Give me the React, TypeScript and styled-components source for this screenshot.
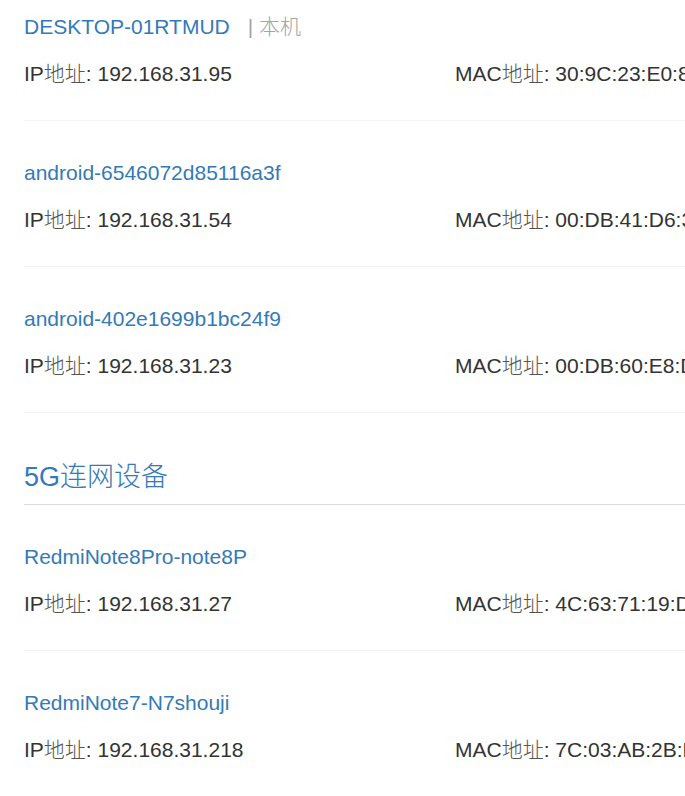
import React from "react";
import styled, { createGlobalStyle } from "styled-components";

const Global = createGlobalStyle`
  html, body {
    margin: 0;
    padding: 0;
    background: #fff;
    overflow: hidden;
  }
  body {
    font-family: "Liberation Sans", Arial, "Noto Sans CJK SC", sans-serif;
    color: #333;
  }
`;

const Page = styled.div`
  width: 900px;
  padding: 12px 0 0 24px;
`;

const Item = styled.div`
  border-bottom: 1px solid #f3f3f3;
  padding-bottom: 31px;
  margin-bottom: 37px;
`;

const NameRow = styled.div`
  display: flex;
  align-items: center;
  height: 30px;
  font-size: 21px;
  line-height: 30px;
  margin-bottom: 17px;
  white-space: nowrap;
  overflow: visible;
`;

const Name = styled.span`
  color: #337ab7;
`;

const Self = styled.span`
  color: #a3a3a3;
  margin-left: 18px;
`;

const InfoRow = styled.div`
  display: grid;
  grid-template-columns: 431px 1fr;
  align-items: center;
  height: 30px;
  font-size: 21px;
  line-height: 30px;
  white-space: nowrap;
`;

const Cjk = styled.span<{ $tone?: string }>`
  font-family: "Noto Sans CJK SC", sans-serif;
  font-weight: 300;
  line-height: 1;
  color: ${(p) => p.$tone || "#555"};
`;

const SectionTitle = styled.h2`
  margin: 46px 0 37px;
  padding-bottom: 9px;
  height: 36px;
  border-bottom: 1px solid #dcdcdc;
  font-size: 27px;
  line-height: 36px;
  font-weight: normal;
  color: #337ab7;
`;

const TitleCjk = styled.span`
  font-family: "Noto Sans CJK SC", sans-serif;
  font-weight: 300;
  line-height: 1;
`;

type Dev = { name: string; ip: string; mac: string; self?: boolean };

const wifi24: Dev[] = [
  { name: "DESKTOP-01RTMUD", ip: "192.168.31.95", mac: "30:9C:23:E0:8A:5F", self: true },
  { name: "android-6546072d85116a3f", ip: "192.168.31.54", mac: "00:DB:41:D6:3C:1E" },
  { name: "android-402e1699b1bc24f9", ip: "192.168.31.23", mac: "00:DB:60:E8:D2:7A" },
];

const wifi5: Dev[] = [
  { name: "RedmiNote8Pro-note8P", ip: "192.168.31.27", mac: "4C:63:71:19:D8:B2" },
  { name: "RedmiNote7-N7shouji", ip: "192.168.31.218", mac: "7C:03:AB:2B:E4:90" },
];

const Device = ({ d }: { d: Dev }) => (
  <Item>
    <NameRow>
      <Name>{d.name}</Name>
      {d.self && (
        <Self>
          | <Cjk $tone="#a3a3a3">本机</Cjk>
        </Self>
      )}
    </NameRow>
    <InfoRow>
      <span>
        IP<Cjk>地址</Cjk>: {d.ip}
      </span>
      <span>
        MAC<Cjk>地址</Cjk>: {d.mac}
      </span>
    </InfoRow>
  </Item>
);

export default function App() {
  return (
    <>
      <Global />
      <Page>
        {wifi24.map((d) => (
          <Device key={d.name} d={d} />
        ))}
        <SectionTitle>
          5G<TitleCjk>连网设备</TitleCjk>
        </SectionTitle>
        {wifi5.map((d) => (
          <Device key={d.name} d={d} />
        ))}
      </Page>
    </>
  );
}
